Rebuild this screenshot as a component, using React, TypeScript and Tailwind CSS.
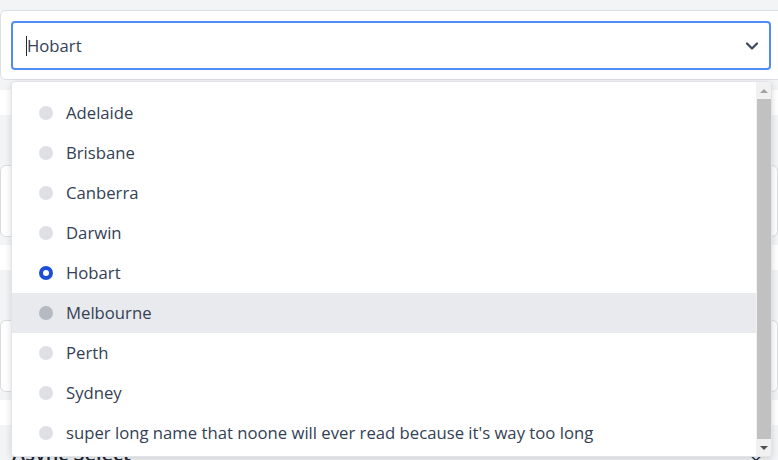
import React from "react";
import { ChevronDown, ChevronsUpDown } from "lucide-react";

const cities = [
  "Adelaide",
  "Brisbane",
  "Canberra",
  "Darwin",
  "Hobart",
  "Melbourne",
  "Perth",
  "Sydney",
  "super long name that noone will ever read because it's way too long",
];

function Radio({ state }: { state: "idle" | "active" | "checked" }) {
  if (state === "checked") {
    return (
      <span className="w-[14px] h-[14px] rounded-full bg-[#1d4ed8] flex items-center justify-center shrink-0">
        <span className="w-[6px] h-[6px] rounded-full bg-white" />
      </span>
    );
  }
  return (
    <span
      className={
        state === "active"
          ? "w-[14px] h-[14px] rounded-full bg-[#b5b9c2] shrink-0"
          : "w-[14px] h-[14px] rounded-full bg-[#dfe0e5] shrink-0"
      }
    />
  );
}

function Scrollbar() {
  return (
    <div className="w-[15px] h-full bg-[#f1f1f1] flex flex-col items-center">
      <div className="h-[17px] flex items-center justify-center">
        <span className="w-0 h-0 border-l-[4px] border-r-[4px] border-b-[4px] border-l-transparent border-r-transparent border-b-[#a3a3a3]" />
      </div>
      <div className="w-[14px] flex-1 bg-[#c1c1c1]" />
      <div className="h-[17px] flex items-center justify-center">
        <span className="w-0 h-0 border-l-[4px] border-r-[4px] border-t-[4px] border-l-transparent border-r-transparent border-t-[#505050]" />
      </div>
    </div>
  );
}

function Section() {
  return (
    <div className="flex flex-col">
      <div className="h-[25px] bg-white" />
      <div className="h-[50px] bg-[#f3f4f6]" />
      <div className="h-[72px] bg-white border border-[#d8dbe0] rounded-md" />
      <div className="h-[8px] bg-[#f3f4f6]" />
    </div>
  );
}

export default function App() {
  return (
    <div
      className="w-[778px] h-[460px] overflow-hidden bg-[#f3f4f6] text-[#334155]"
      style={{ fontFamily: '"Open Sans", "Noto Sans", sans-serif' }}
    >
      <div className="h-[10px]" />
      <div className="relative bg-white border border-[#dcdfe3] rounded-md p-[10px] pb-[9px] mr-[-10px] z-10">
        <div className="w-[760px] h-[49px] border-2 border-[#4f8ef7] rounded-[4px] flex items-center justify-between pl-[13px] pr-[7px]">
          <span className="text-[16.7px] text-[#334155] border-l border-[#1f2937] leading-[20px] mt-[1px]">Hobart</span>
          <ChevronDown size={20} strokeWidth={2.75} className="text-[#3f4a5e]" />
        </div>
        <div className="absolute left-[10px] top-[70px] w-[761px] h-[376px] bg-white border border-[#e2e4e8] rounded-[4px] shadow-[0_2px_6px_rgba(0,0,0,0.15)] flex overflow-hidden">
          <ul className="flex-1 pt-[11px]">
            {cities.map((c) => (
              <li
                key={c}
                className={
                  c === "Melbourne"
                    ? "h-[40px] flex items-center gap-[13px] pl-[27px] bg-[#e9eaed]"
                    : "h-[40px] flex items-center gap-[13px] pl-[27px]"
                }
              >
                <Radio state={c === "Hobart" ? "checked" : c === "Melbourne" ? "active" : "idle"} />
                <span className="text-[16.7px] text-[#334155] whitespace-nowrap">{c}</span>
              </li>
            ))}
          </ul>
          <Scrollbar />
        </div>
      </div>
      <div className="h-[10px]" />
      <Section />
      <Section />
      <div className="h-[25px] bg-white" />
      <div className="flex items-center justify-between px-[12px] pt-[14px]">
        <h2 className="text-[20px] font-semibold text-[#1f2937]">Async Select</h2>
        <ChevronsUpDown size={20} className="text-[#334155]" />
      </div>
    </div>
  );
}
